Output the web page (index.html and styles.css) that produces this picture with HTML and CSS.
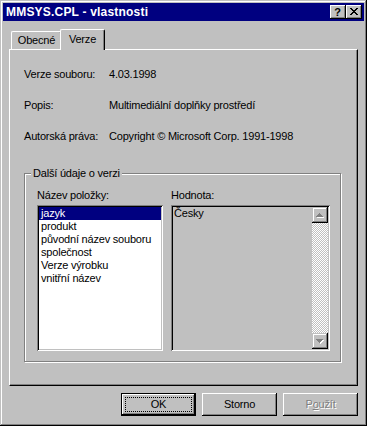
FILE: index.html
```html
<!DOCTYPE html>
<html lang="cs">
<head>
<meta charset="utf-8">
<title>MMSYS.CPL - vlastnosti</title>
<link rel="stylesheet" href="styles.css">
</head>
<body>
<div class="window">
  <div class="titlebar">
    <span class="title">MMSYS.CPL - vlastnosti</span>
    <div class="tbtns">
      <div class="tbtn help">?</div>
      <div class="tbtn close">
        <svg width="8" height="7" viewBox="0 0 8 7" shape-rendering="crispEdges">
          <path fill="#000" d="M0 0h2v1h-2zM6 0h2v1h-2zM1 1h2v1h-2zM5 1h2v1h-2zM2 2h4v1h-4zM3 3h2v1h-2zM2 4h4v1h-4zM1 5h2v1h-2zM5 5h2v1h-2zM0 6h2v1h-2zM6 6h2v1h-2z"/>
        </svg>
      </div>
    </div>
  </div>
  <div class="body">
    <div class="tabs">
      <div class="tab tab-general">Obecné</div>
      <div class="tab tab-version active">Verze</div>
    </div>
    <div class="panel">
      <div class="props">
        <div class="plabel">Verze souboru:</div><div class="pvalue">4.03.1998</div>
        <div class="plabel">Popis:</div><div class="pvalue">Multimediální doplňky prostředí</div>
        <div class="plabel">Autorská práva:</div><div class="pvalue">Copyright © Microsoft Corp. 1991-1998</div>
      </div>
      <div class="group">
        <div class="legend">Další údaje o verzi</div>
        <div class="cols">
          <div class="col col-names">
            <div class="clabel">Název položky:</div>
            <div class="listbox">
              <div class="item selected">jazyk</div>
              <div class="item">produkt</div>
              <div class="item">původní název souboru</div>
              <div class="item">společnost</div>
              <div class="item">Verze výrobku</div>
              <div class="item">vnitřní název</div>
            </div>
          </div>
          <div class="col col-values">
            <div class="clabel">Hodnota:</div>
            <div class="valuebox">
              <div class="valtext">Česky</div>
              <div class="vscroll">
                <div class="sbtn">
                  <svg width="16" height="16" viewBox="0 0 16 16" shape-rendering="crispEdges">
                    <path fill="#fff" d="M8 7h1v1h-1zM7 8h3v1h-3zM6 9h5v1h-5zM5 10h7v1h-7z"/>
                    <path fill="#808080" d="M7 6h1v1h-1zM6 7h3v1h-3zM5 8h5v1h-5zM4 9h7v1h-7z"/>
                  </svg>
                </div>
                <div class="strack"></div>
                <div class="sbtn">
                  <svg width="16" height="16" viewBox="0 0 16 16" shape-rendering="crispEdges">
                    <path fill="#fff" d="M5 7h7v1h-7zM6 8h5v1h-5zM7 9h3v1h-3zM8 10h1v1h-1z"/>
                    <path fill="#808080" d="M4 6h7v1h-7zM5 7h5v1h-5zM6 8h3v1h-3zM7 9h1v1h-1z"/>
                  </svg>
                </div>
              </div>
            </div>
          </div>
        </div>
      </div>
    </div>
    <div class="buttons">
      <div class="btn default"><span>OK</span></div>
      <div class="btn">Storno</div>
      <div class="btn disabled">P<u>o</u>užít</div>
    </div>
  </div>
</div>
</body>
</html>
```
FILE: styles.css
```css
* { box-sizing: border-box; }

html, body {
  margin: 0;
  background: #c0c0c0;
}

body {
  font-family: "Liberation Sans", Arial, sans-serif;
  font-size: 11px;
  line-height: 13px;
  letter-spacing: -0.2px;
  color: #000;
}

.window {
  width: 367px;
  height: 426px;
  padding: 3px;
  background: #c0c0c0;
  display: flex;
  flex-direction: column;
  box-shadow: inset -1px -1px #000, inset 1px 1px #c0c0c0, inset -2px -2px #808080, inset 2px 2px #fff;
}

.titlebar {
  height: 18px;
  background: #000080;
  color: #fff;
  display: flex;
  align-items: center;
  justify-content: space-between;
  padding: 0 2px 0 3px;
}

.title {
  font-weight: bold;
  font-size: 12px;
  letter-spacing: 0.2px;
}

.tbtns {
  display: flex;
}

.tbtn {
  width: 16px;
  height: 14px;
  background: #c0c0c0;
  color: #000;
  display: flex;
  align-items: center;
  justify-content: center;
  box-shadow: inset -1px -1px #000, inset 1px 1px #fff, inset -2px -2px #808080;
}

.help {
  font-weight: bold;
  font-size: 11px;
  line-height: 12px;
  letter-spacing: 0;
  padding-right: 1px;
}

.close svg {
  display: block;
  margin-top: -1px;
}

.body {
  flex: 1;
  display: flex;
  flex-direction: column;
  padding: 8px 6px 7px 6px;
}

.tabs {
  height: 20px;
  display: flex;
  align-items: flex-end;
  padding-left: 2px;
  position: relative;
  z-index: 1;
}

.tab {
  height: 18px;
  padding-top: 2px;
  text-align: center;
  background: #c0c0c0;
  border-left: 1px solid #fff;
  border-top: 1px solid #fff;
  border-right: 1px solid #000;
  border-radius: 2px 2px 0 0;
  box-shadow: inset -1px 0 #808080;
}

.tab-general {
  width: 51px;
}

.tab-version {
  width: 41px;
}

.tab.active {
  width: 45px;
  height: 21px;
  margin: 0 -2px -1px -2px;
  padding-top: 3px;
}

.panel {
  height: 337px;
  border-left: 1px solid #fff;
  border-top: 1px solid #fff;
  border-right: 1px solid #000;
  border-bottom: 1px solid #000;
  box-shadow: inset -1px -1px #808080;
  padding: 18px 0 0 14px;
}

.props {
  display: grid;
  grid-template-columns: 85px auto;
  row-gap: 18px;
}

.group {
  margin-top: 30px;
  width: 317px;
  height: 189px;
  border: 1px solid #808080;
  box-shadow: inset 1px 1px #fff, 1px 1px #fff;
  padding: 0 10px 0 12px;
}

.legend {
  width: fit-content;
  margin: -7px 0 0 -6px;
  padding: 0 2px;
  background: #c0c0c0;
}

.cols {
  display: flex;
  gap: 8px;
  margin-top: 9px;
}

.clabel {
  margin-bottom: 3px;
}

.listbox,
.valuebox {
  height: 146px;
  padding: 2px;
  box-shadow: inset 1px 1px #808080, inset -1px -1px #fff, inset 2px 2px #000, inset -2px -2px #c0c0c0;
}

.listbox {
  width: 126px;
  background: #fff;
}

.item {
  padding-left: 2px;
  height: 13px;
  white-space: nowrap;
}

.item.selected {
  background: #000080;
  color: #fff;
}

.valuebox {
  width: 159px;
  background: #c0c0c0;
  display: flex;
}

.valtext {
  flex: 1;
  padding-left: 1px;
}

.vscroll {
  width: 16px;
  display: flex;
  flex-direction: column;
}

.sbtn {
  width: 16px;
  height: 16px;
  background: #c0c0c0;
  box-shadow: inset -1px -1px #000, inset 1px 1px #c0c0c0, inset -2px -2px #808080, inset 2px 2px #fff;
}

.sbtn svg {
  display: block;
}

.strack {
  flex: 1;
  background-image: conic-gradient(#fff 25%, #c0c0c0 0 50%, #fff 0 75%, #c0c0c0 0);
  background-size: 2px 2px;
}

.buttons {
  margin-top: 7px;
  display: flex;
  justify-content: flex-end;
  gap: 6px;
}

.btn {
  position: relative;
  width: 75px;
  height: 23px;
  display: flex;
  align-items: center;
  justify-content: center;
  background: #c0c0c0;
  box-shadow: inset -1px -1px #000, inset 1px 1px #fff, inset -2px -2px #808080;
}

.btn.default {
  box-shadow: inset 0 0 0 1px #000, inset -2px -2px #000, inset 2px 2px #fff, inset -3px -3px #808080;
}

.btn.default::after {
  content: "";
  position: absolute;
  inset: 4px;
  border: 1px dotted #000;
}

.btn.disabled {
  color: #808080;
  text-shadow: 1px 1px #fff;
}
```
